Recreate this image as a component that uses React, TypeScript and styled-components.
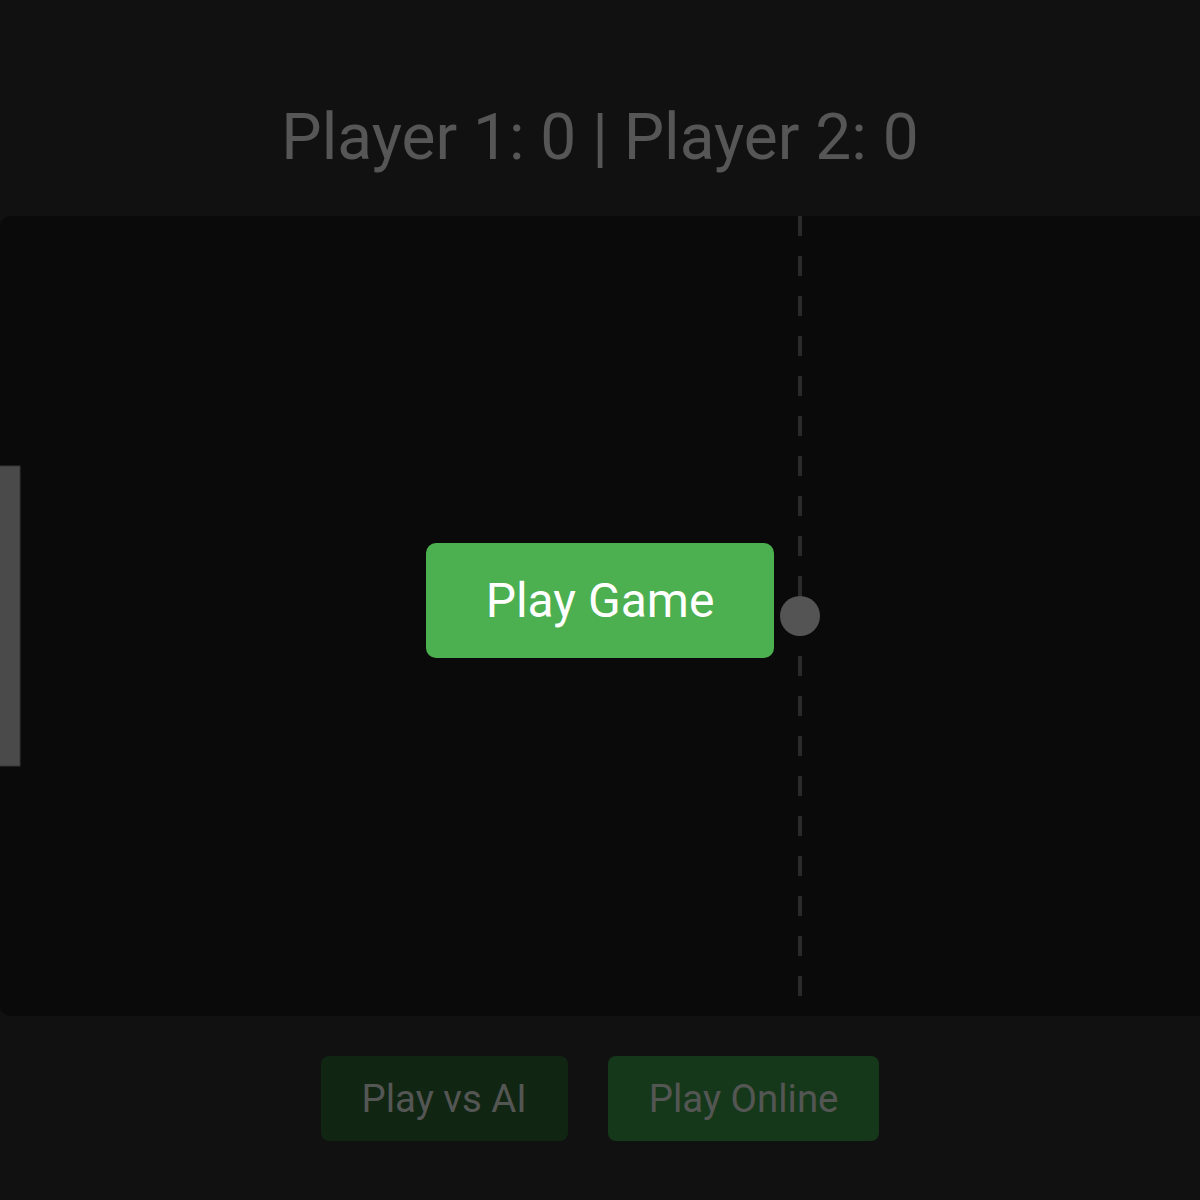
import { createGlobalStyle } from "styled-components";
import styled from "styled-components";

const GlobalStyle = createGlobalStyle`
  html,
  body {
    margin: 0;
    padding: 0;
    overflow: hidden;
    background: #222222;
    font-family: Roboto, "Noto Sans", "Liberation Sans", sans-serif;
  }
`;

const FIELD_WIDTH = 1600;
const FIELD_HEIGHT = 800;
const PADDLE_WIDTH = 20;
const PADDLE_HEIGHT = 300;
const BALL_RADIUS = 20;

const Page = styled.main`
  display: flex;
  flex-direction: column;
  padding-top: 100px;
  min-height: 100vh;
  box-sizing: border-box;
`;

const Score = styled.h1`
  margin: 0 0 41px;
  text-align: center;
  font-size: 64px;
  font-weight: 400;
  color: #acacac;
`;

const Board = styled.div`
  flex-shrink: 0;
  width: ${FIELD_WIDTH}px;
  height: ${FIELD_HEIGHT}px;
  border-radius: 10px;
  overflow: hidden;
  background: #141414;

  svg {
    display: block;
  }
`;

const Controls = styled.div`
  display: flex;
  justify-content: center;
  gap: 40px;
  margin-top: 40px;
`;

const ModeButton = styled.button<{ $tone: "dark" | "light" }>`
  font-family: inherit;
  font-size: 38.4px;
  line-height: normal;
  padding: 20px 41px;
  border: none;
  border-radius: 8px;
  color: #a8aca8;
  background: ${({ $tone }) => ($tone === "dark" ? "#214a24" : "#2c7034")};
  cursor: pointer;
`;

const Overlay = styled.div`
  position: fixed;
  inset: 0;
  display: flex;
  align-items: center;
  justify-content: center;
  background: rgba(0, 0, 0, 0.5);
`;

const StartButton = styled.button`
  font-family: inherit;
  font-size: 48px;
  line-height: normal;
  padding: 29px 60px;
  border: none;
  border-radius: 10px;
  color: #ffffff;
  background: #4caf50;
  cursor: pointer;
`;

const Field = () => {
  const dashes = Array.from({ length: FIELD_HEIGHT / 40 }, (_, i) => i * 40);

  return (
    <svg width={FIELD_WIDTH} height={FIELD_HEIGHT} viewBox={`0 0 ${FIELD_WIDTH} ${FIELD_HEIGHT}`}>
      {dashes.map((y) => (
        <rect key={y} x={FIELD_WIDTH / 2 - 2} y={y} width={4} height={20} fill="#555555" />
      ))}
      <rect
        x={-1}
        y={(FIELD_HEIGHT - PADDLE_HEIGHT) / 2}
        width={PADDLE_WIDTH + 1}
        height={PADDLE_HEIGHT}
        fill="#959595"
        stroke="#6a6a6a"
        strokeWidth={1}
      />
      <circle cx={FIELD_WIDTH / 2} cy={FIELD_HEIGHT / 2} r={BALL_RADIUS} fill="#a8a8a8" />
    </svg>
  );
};

export default function App() {
  return (
    <>
      <GlobalStyle />
      <Page>
        <Score>Player 1: 0 | Player 2: 0</Score>
        <Board>
          <Field />
        </Board>
        <Controls>
          <ModeButton $tone="dark">Play vs AI</ModeButton>
          <ModeButton $tone="light">Play Online</ModeButton>
        </Controls>
      </Page>
      <Overlay>
        <StartButton>Play Game</StartButton>
      </Overlay>
    </>
  );
}
